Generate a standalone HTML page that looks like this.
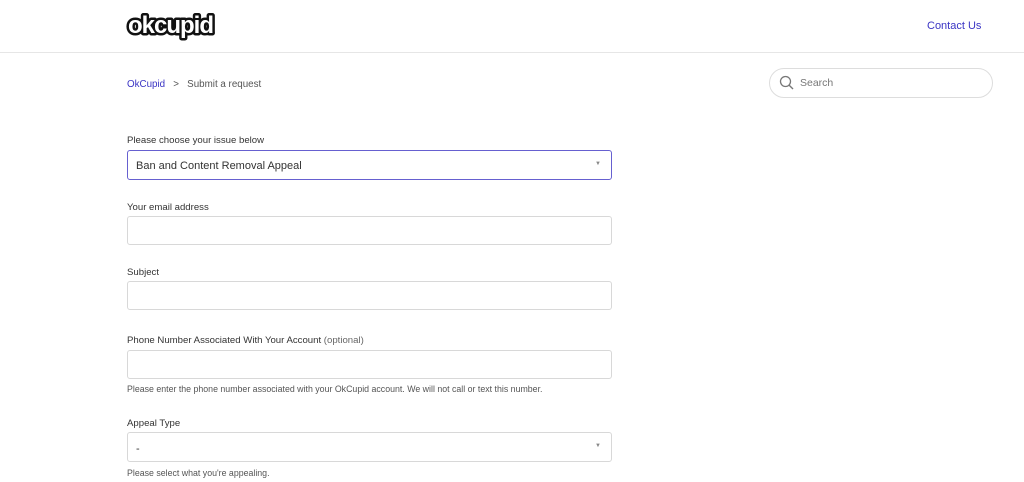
<!DOCTYPE html>
<html><head><meta charset="utf-8"><style>
*{box-sizing:border-box;margin:0;padding:0}
body{width:1024px;height:482px;overflow:hidden;background:#fff;font-family:"Liberation Sans",sans-serif;color:#333;position:relative}
.a{position:absolute}
.hdr{left:0;top:52px;width:1024px;height:1px;background:#e6e6e6}
.lbl{font-size:9.6px;color:#333;left:127px}
.in{left:127px;width:485px;border:1px solid #d8d8d8;border-radius:3px;height:29px}
.hint{font-size:8.8px;color:#555;left:127px}
.arr{position:absolute;right:10px;top:10px;font-size:6px;color:#888}
</style></head><body>
<svg class="a" style="left:126px;top:8px" width="92" height="34" viewBox="0 0 92 34">
<text x="2" y="25" font-family="Liberation Sans" font-weight="bold" font-size="24" letter-spacing="-1" fill="#fff" stroke="#111" stroke-width="5" stroke-linejoin="round" paint-order="stroke">okcupid</text>
</svg>
<div class="a" style="left:927px;top:20px;font-size:11px;color:#3a34c4">Contact Us</div>
<div class="a hdr"></div>
<div class="a" style="left:127px;top:79px;font-size:9.8px;color:#555"><span style="color:#3a34c4">OkCupid</span>&nbsp;&nbsp;&nbsp;&gt;&nbsp;&nbsp;&nbsp;Submit a request</div>
<div class="a" style="left:769px;top:68px;width:224px;height:30px;border:1px solid #ddd;border-radius:15px">
<svg class="a" style="left:9px;top:6px" width="16" height="16" viewBox="0 0 16 16"><circle cx="6.5" cy="6.5" r="5" fill="none" stroke="#777" stroke-width="1.3"/><line x1="10.2" y1="10.2" x2="14" y2="14" stroke="#777" stroke-width="1.4"/></svg>
<div class="a" style="left:30px;top:8px;font-size:10.5px;color:#777">Search</div></div>
<div class="a lbl" style="top:135px">Please choose your issue below</div>
<div class="a in" style="top:150px;height:30px;border-color:#6660d0"><div class="a" style="left:8px;top:9px;font-size:11px;color:#333">Ban and Content Removal Appeal</div><span class="arr">▼</span></div>
<div class="a lbl" style="top:202px">Your email address</div>
<div class="a in" style="top:216px"></div>
<div class="a lbl" style="top:267px">Subject</div>
<div class="a in" style="top:281px"></div>
<div class="a lbl" style="top:335px">Phone Number Associated With Your Account <span style="color:#666">(optional)</span></div>
<div class="a in" style="top:350px"></div>
<div class="a hint" style="top:384px">Please enter the phone number associated with your OkCupid account. We will not call or text this number.</div>
<div class="a lbl" style="top:418px">Appeal Type</div>
<div class="a in" style="top:432px;height:30px"><div class="a" style="left:8px;top:10px;font-size:11px;color:#333">-</div><span class="arr">▼</span></div>
<div class="a hint" style="top:468px">Please select what you're appealing.</div>
</body></html>
